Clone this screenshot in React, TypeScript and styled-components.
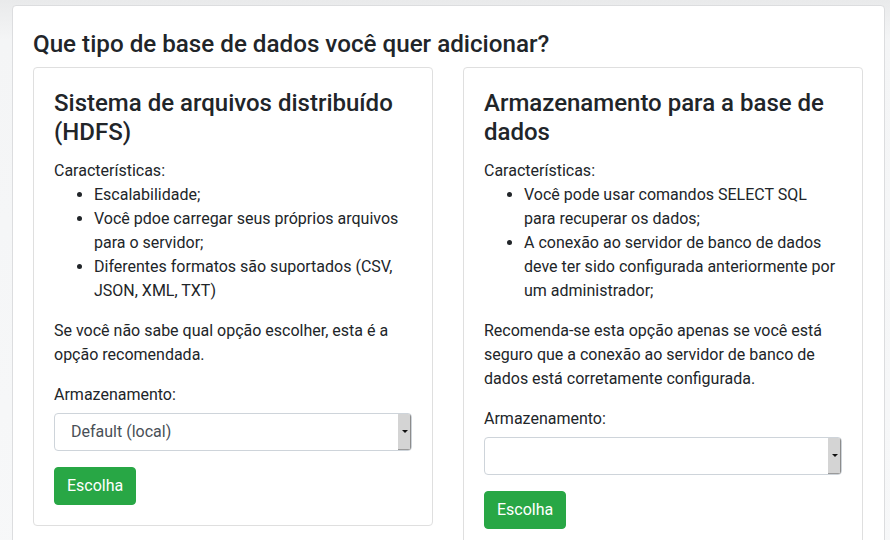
import React from "react";
import styled, { createGlobalStyle } from "styled-components";

const GlobalStyle = createGlobalStyle`
  html, body {
    margin: 0;
    padding: 0;
  }
  body {
    background: linear-gradient(180deg, #e9eaeb 0px, #f4f5f6 40px, #f7f8f9 100%);
    font-family: Roboto, "Noto Sans", "Liberation Sans", sans-serif;
    color: #212529;
    font-size: 16px;
    line-height: 1.5;
  }
  * { box-sizing: border-box; }
`;

const Page = styled.div`
  padding: 5px 5px 0 12px;
  min-height: 540px;
`;

const Panel = styled.div`
  background: #fff;
  border: 1px solid #dcdddf;
  border-radius: 4px;
  padding: 24px 21px 40px 20px;
  min-height: 560px;
`;

const Heading = styled.h2`
  margin: 0 0 8px 0;
  font-size: 24.2px;
  font-weight: 500;
  line-height: 28.8px;
`;

const CardGrid = styled.div`
  display: grid;
  grid-template-columns: 1fr 1fr;
  column-gap: 30px;
  align-items: start;
`;

const Card = styled.div`
  border: 1px solid #dfdfdf;
  border-radius: 4px;
  padding: 21px 20px 20px 20px;
  background: #fff;
`;

const CardTitle = styled.h3`
  margin: 0 0 13px 0;
  font-size: 24px;
  font-weight: 500;
  line-height: 1.2;
`;

const Text = styled.div`
  margin: 0;
`;

const Paragraph = styled.p`
  margin: 0 0 16px 0;
`;

const List = styled.ul`
  margin: 0 0 16px 0;
  padding-left: 40px;
`;

const Label = styled.label`
  display: block;
  margin-bottom: 6px;
`;

const FormGroup = styled.div`
  margin-bottom: 16px;
`;

const SelectBox = styled.div`
  display: flex;
  height: 38px;
  border: 1px solid #ced4da;
  border-radius: 4px;
  background: #fff;
  overflow: hidden;
`;

const SelectValue = styled.div`
  flex: 1;
  padding: 6px 16px;
  color: #495057;
  font-size: 16px;
  line-height: 24px;
  white-space: nowrap;
`;

const ArrowButton = styled.div`
  width: 14px;
  margin: -1px -1px -1px 0;
  background: #d4d4d4;
  border-right: 2px solid #8c8c8c;
  border-bottom: 2px solid #9a9a9a;
  border-top-left-radius: 2px;
  border-top-right-radius: 3px;
  display: flex;
  align-items: center;
  justify-content: center;
`;

const Triangle = styled.span`
  width: 0;
  height: 0;
  border-left: 3px solid transparent;
  border-right: 3px solid transparent;
  border-top: 3px solid #111;
  margin-left: 1px;
`;

const Button = styled.button`
  background: #28a745;
  color: #fff;
  border: 1px solid #28a745;
  border-radius: 4px;
  padding: 6px 12px;
  font-family: inherit;
  font-size: 16px;
  line-height: 24px;
  font-weight: 400;
  cursor: pointer;
`;

type Option = {
  title: string;
  features: string[];
  note: string;
  selected: string;
};

const options: Option[] = [
  {
    title: "Sistema de arquivos distribuído (HDFS)",
    features: [
      "Escalabilidade;",
      "Você pdoe carregar seus próprios arquivos para o servidor;",
      "Diferentes formatos são suportados (CSV, JSON, XML, TXT)",
    ],
    note: "Se você não sabe qual opção escolher, esta é a opção recomendada.",
    selected: "Default (local)",
  },
  {
    title: "Armazenamento para a base de dados",
    features: [
      "Você pode usar comandos SELECT SQL para recuperar os dados;",
      "A conexão ao servidor de banco de dados deve ter sido configurada anteriormente por um administrador;",
    ],
    note:
      "Recomenda-se esta opção apenas se você está seguro que a conexão ao servidor de banco de dados está corretamente configurada.",
    selected: "",
  },
];

export default function App() {
  return (
    <>
      <GlobalStyle />
      <Page>
        <Panel>
          <Heading>Que tipo de base de dados você quer adicionar?</Heading>
          <CardGrid>
            {options.map((o) => (
              <Card key={o.title}>
                <CardTitle>{o.title}</CardTitle>
                <Text>Características:</Text>
                <List>
                  {o.features.map((f) => (
                    <li key={f}>{f}</li>
                  ))}
                </List>
                <Paragraph>{o.note}</Paragraph>
                <FormGroup>
                  <Label>Armazenamento:</Label>
                  <SelectBox>
                    <SelectValue>{o.selected || "\u00a0"}</SelectValue>
                    <ArrowButton>
                      <Triangle />
                    </ArrowButton>
                  </SelectBox>
                </FormGroup>
                <Button>Escolha</Button>
              </Card>
            ))}
          </CardGrid>
        </Panel>
      </Page>
    </>
  );
}
